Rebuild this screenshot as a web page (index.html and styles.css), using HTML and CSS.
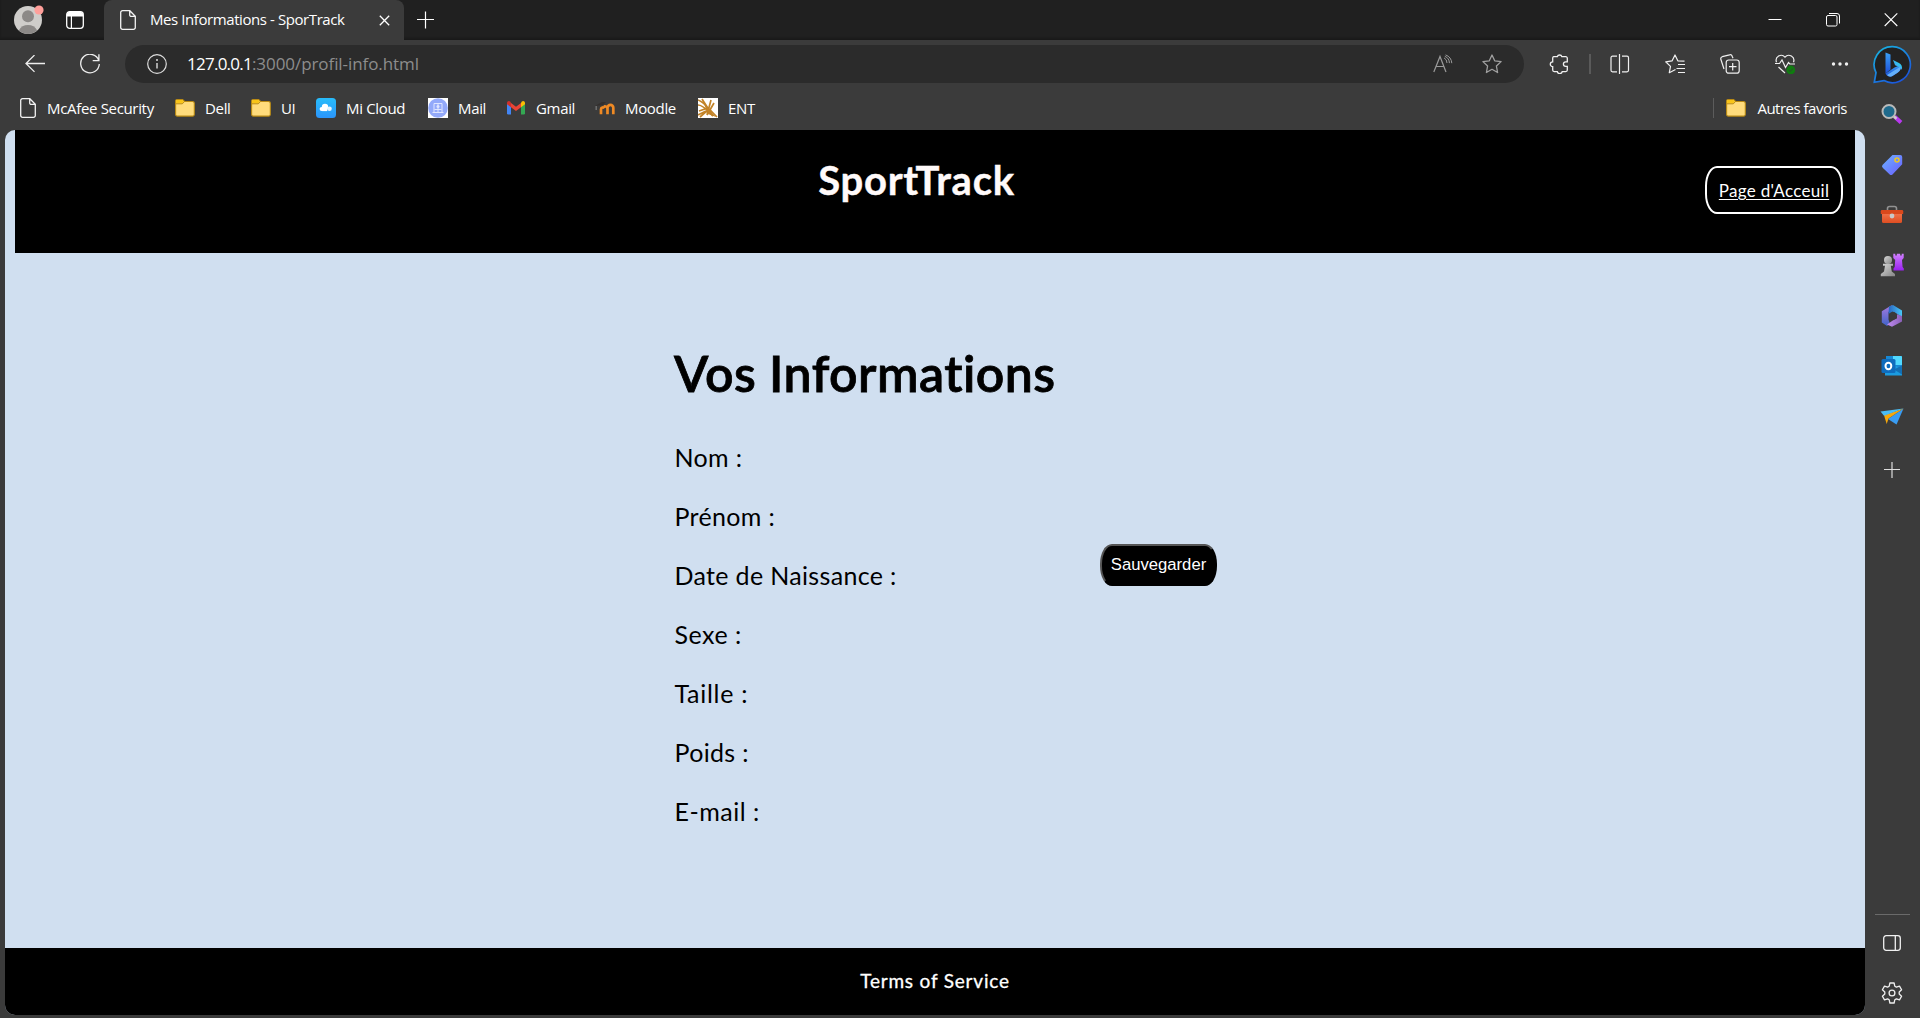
FILE: index.html
```html
<!DOCTYPE html>
<html lang="fr">
<head>
<meta charset="utf-8">
<title>Mes Informations - SporTrack</title>
<link rel="stylesheet" href="styles.css">
</head>
<body>
<svg width="0" height="0" class="defs">
  <defs>
    <linearGradient id="gBlue" x1="0" y1="0" x2="1" y2="1"><stop offset="0" stop-color="#6cb4ff"/><stop offset="1" stop-color="#6a5cff"/></linearGradient>
    <linearGradient id="gBing" x1="0" y1="0" x2="0" y2="1"><stop offset="0" stop-color="#3aa0f5"/><stop offset="1" stop-color="#1e50d8"/></linearGradient>
    <linearGradient id="gRing" x1="0" y1="0" x2=".7" y2="1"><stop offset="0" stop-color="#18b8e0"/><stop offset="1" stop-color="#1b55dd"/></linearGradient>
    <linearGradient id="gBowl" x1="0" y1="1" x2="1" y2="0"><stop offset="0" stop-color="#4f8df5"/><stop offset="1" stop-color="#20e0e8"/></linearGradient>
    <linearGradient id="gCloud" x1="0" y1="0" x2="0" y2="1"><stop offset="0" stop-color="#28bcfa"/><stop offset="1" stop-color="#2b95fb"/></linearGradient>
    <linearGradient id="gBox" x1="0" y1="0" x2="0" y2="1"><stop offset="0" stop-color="#f47a52"/><stop offset="1" stop-color="#de4e22"/></linearGradient>
    <linearGradient id="gPawn" x1="0" y1="0" x2="1" y2="1"><stop offset="0" stop-color="#d8d8d8"/><stop offset="1" stop-color="#858585"/></linearGradient>
    <linearGradient id="gRook" x1="0" y1="0" x2="0" y2="1"><stop offset="0" stop-color="#d080ff"/><stop offset="1" stop-color="#9a20f0"/></linearGradient>
    <linearGradient id="gM1" x1="0" y1="0" x2="0" y2="1"><stop offset="0" stop-color="#a77ade"/><stop offset="1" stop-color="#3f63c8"/></linearGradient>
    <linearGradient id="gM2" x1="0" y1="0" x2="1" y2="0"><stop offset="0" stop-color="#2864c0"/><stop offset="1" stop-color="#48c8f8"/></linearGradient>
    <linearGradient id="gM3" x1="0" y1="0" x2="1" y2="0"><stop offset="0" stop-color="#c08cf0"/><stop offset="1" stop-color="#8a60b8"/></linearGradient>
    <symbol id="doc" viewBox="0 0 16 20"><path d="M2.5 .7h7.3l5.500 5.500v11.300a1.800 1.800 0 0 1-1.800 1.800h-11A1.800 1.800 0 0 1 .7 17.500V2.500A1.800 1.800 0 0 1 2.500.7zM9.700.9v4a1.500 1.500 0 0 0 1.500 1.500h4" fill="none" stroke="#f2f2f2" stroke-width="1.300"/></symbol>
    <symbol id="folder" viewBox="0 0 20 20"><path d="M.6 3a1.500 1.500 0 0 1 1.500-1.500h5.500l2 2h8a1.700 1.700 0 0 1 1.700 1.700v11.200a1.700 1.700 0 0 1-1.700 1.700H2.300a1.700 1.700 0 0 1-1.700-1.700z" fill="#ffdc7c" stroke="#b98a14" stroke-width="1.100"/><path d="M1.100 5.500V3.100a1 1 0 0 1 1-1.100h5.300l1.500 1.600-1.700 1.900z" fill="#f8c418"/><path d="M1 5.800h6.200l2.200-2" fill="none" stroke="#b98a14"/></symbol>
  </defs>
</svg>

<div class="browser">
  <div class="titlebar">
    <svg class="avatar" width="32" height="32" viewBox="0 0 32 32"><circle cx="15" cy="16" r="14" fill="#cfcdca"/><circle cx="15" cy="12.200" r="6" fill="#8c8987"/><path d="M5.800 26.500a10.500 10.500 0 0 1 18.400 0A14 14 0 0 1 5.800 26.500z" fill="#8c8987"/><circle cx="26" cy="6" r="4.600" fill="#ff9f9a"/></svg>
    <svg class="workspaces" width="18" height="18" viewBox="0 0 18 18"><rect x=".7" y=".7" width="16.600" height="16.600" rx="3" fill="none" stroke="#fff" stroke-width="1.300"/><path d="M1 5.500V3a2 2 0 0 1 2-2h12a2 2 0 0 1 2 2v2.500z" fill="#fff"/><path d="M5.400 5v12" stroke="#fff" stroke-width="1.200"/></svg>
    <div class="tab">
      <svg width="16" height="20"><use href="#doc"/></svg>
      <span class="tab-title">Mes Informations - SporTrack</span>
      <svg class="tab-close" width="11" height="11" viewBox="0 0 11 11"><path d="M.8.8l9.400 9.400M10.200.8.8 10.200" stroke="#fff" stroke-width="1.300"/></svg>
    </div>
    <svg class="new-tab" width="18" height="18" viewBox="0 0 18 18"><path d="M9.500 .5v17M1 8.500h17" stroke="#fff" stroke-width="1.200"/></svg>
    <div class="window-buttons">
      <svg width="14" height="14" viewBox="0 0 14 14"><path d="M.5 6.500h13" stroke="#fff"/></svg>
      <svg width="14" height="14" viewBox="0 0 14 14"><rect x=".5" y="2.500" width="10.500" height="10.500" rx="1.500" fill="none" stroke="#fff"/><path d="M3 .5h8a2.500 2.500 0 0 1 2.500 2.500v7.500" fill="none" stroke="#fff"/></svg>
      <svg width="14" height="14" viewBox="0 0 14 14"><path d="M.7.4l12.600 12.600M13.300.4.7 13" stroke="#fff" stroke-width="1.100"/></svg>
    </div>
  </div>

  <div class="workarea">
    <div class="content">
      <div class="toolbar">
        <svg class="back" width="20" height="18" viewBox="0 0 20 18"><path d="M20 8.500H1M9.500.1 1 8.500l8.500 8.400" fill="none" stroke="#eee" stroke-width="1.300"/></svg>
        <svg class="reload" width="20" height="20" viewBox="0 0 20 20"><path d="M18.800 6.500A9.300 9.300 0 1 0 19.300 10M18.900.3v6.300h-6.200" fill="none" stroke="#eee" stroke-width="1.300"/></svg>
        <div class="address">
          <svg width="20" height="20" viewBox="0 0 20 20"><circle cx="10" cy="10" r="9.300" fill="none" stroke="#ddd" stroke-width="1.200"/><path d="M10 9v5.500" stroke="#ddd" stroke-width="1.400"/><circle cx="10" cy="6" r="1" fill="#ddd"/></svg>
          <div class="url"><span class="host">127.0.0.1</span><span class="path">:3000/profil-info.html</span></div>
          <svg class="aloud" width="20" height="20" viewBox="0 0 20 20"><path d="M.8 18 7 2.500 13 18M3 12.500h8" fill="none" stroke="#9a9a9a" stroke-width="1.200"/><path d="M11 3.800a6 6 0 0 1 3 5.200M12.500.9a9.500 9.500 0 0 1 6.300 8.300M11.800 2.300a7.500 7.500 0 0 1 4.600 6.800" fill="none" stroke="#9a9a9a"/></svg>
          <svg width="20" height="20" viewBox="0 0 20 20"><path d="m10 1 2.700 5.800 6.400.8-4.700 4.400 1.200 6.500L10 15.300l-5.600 3.200L5.600 12 .9 7.600l6.400-.8z" fill="none" stroke="#a0a0a0" stroke-width="1.300" stroke-linejoin="round"/></svg>
        </div>
        <div class="tools">
          <svg width="20" height="20" viewBox="0 0 20 20"><path d="M4.700 2.700h3.600a2.400 2.400 0 0 1 4.600 0h3.900a1.500 1.500 0 0 1 1.500 1.500v3.600h-1.600a2.300 2.300 0 0 0 0 4.600h1.600v3.700a1.500 1.500 0 0 1-1.500 1.500h-3.600a2.500 2.500 0 0 1-4.900 0H5.200a1.500 1.500 0 0 1-1.500-1.500v-3.500a2.400 2.400 0 0 1 0-4.800V4.200a1.500 1.500 0 0 1 1-1.500z" fill="none" stroke="#f0f0f0" stroke-width="1.300"/></svg>
          <i class="sep"></i>
          <svg width="20" height="20" viewBox="0 0 20 20"><path d="M7 2.200H2.500A1.500 1.500 0 0 0 1 3.700v12.600a1.500 1.500 0 0 0 1.500 1.500H7M12 2.200h5a1.500 1.500 0 0 1 1.500 1.500v12.600a1.500 1.500 0 0 1-1.500 1.500h-5M9.500 0v20" fill="none" stroke="#f0f0f0" stroke-width="1.200"/></svg>
          <svg width="20" height="20" viewBox="0 0 20 20"><path d="M10.500 15.500 4.300 18.700l1.200-6.300L.7 7.800l6.300-.9 3-5.900 2.800 5.800 6.700.4M13 10.500h7M11.500 14.500H20M13 18.500h7" fill="none" stroke="#f0f0f0" stroke-width="1.200" stroke-linejoin="round"/></svg>
          <svg width="20" height="20" viewBox="0 0 20 20"><rect x="6.200" y="6" width="13" height="13.200" rx="2.500" fill="none" stroke="#f0f0f0" stroke-width="1.200"/><path d="M12.700 9v7.500M9 12.700h7.500M4 15 .9 5.500A2.200 2.200 0 0 1 2.300 2.700L9.500.8a2.200 2.200 0 0 1 2.700 1.400l.8 2" fill="none" stroke="#f0f0f0" stroke-width="1.200"/></svg>
          <svg width="20" height="20" viewBox="0 0 20 20"><path d="M1.500 8.200A5 5 0 0 1 10 3.200a5 5 0 0 1 8.500 5M3.500 13l6.500 6M0 9.500h4.500L7 6l3.500 7.500L13.500 8.500l1.300 1.500H20" fill="none" stroke="#f0f0f0" stroke-width="1.200"/><circle cx="15.800" cy="16" r="4.400" fill="#107c10"/><path d="m13.700 16 1.500 1.500 2.700-2.900" fill="none" stroke="#2c4a2c"/></svg>
          <svg width="20" height="20" viewBox="0 0 20 20"><g fill="#f0f0f0"><circle cx="3.500" cy="10" r="1.700"/><circle cx="10" cy="10" r="1.700"/><circle cx="16.500" cy="10" r="1.700"/></g></svg>
        </div>
      </div>

      <div class="bookmarks">
        <div class="bm bm-doc"><svg width="16" height="20"><use href="#doc"/></svg><span>McAfee Security</span></div>
        <div class="bm"><svg width="20" height="20"><use href="#folder"/></svg><span>Dell</span></div>
        <div class="bm"><svg width="20" height="20"><use href="#folder"/></svg><span>UI</span></div>
        <div class="bm"><svg width="20" height="20" viewBox="0 0 20 20"><rect width="20" height="20" rx="3.500" fill="url(#gCloud)"/><circle cx="9" cy="9" r="3.200" fill="#fff"/><circle cx="5.700" cy="11" r="2.100" fill="#fff"/><path d="M5.700 10h5.500v3.100H5.700z" fill="#fff"/><circle cx="13.500" cy="10.800" r="2.300" fill="#e4f4ff"/></svg><span>Mi Cloud</span></div>
        <div class="bm"><svg width="20" height="20" viewBox="0 0 20 20"><path d="M0 0h20v20H0z" fill="#fff"/><circle cx="10" cy="10" r="9.800" fill="#93a9fa"/><path d="M6 5.500h8v9H6zM4.500 14.500h11M10 6v8M6.500 11.500h7" fill="none" stroke="#dfe5ff"/><circle cx="10" cy="8.500" r="1.500" fill="#dfe5ff"/></svg><span>Mail</span></div>
        <div class="bm"><svg width="20" height="20" viewBox="0 0 20 20"><path d="M1 5.500v9.700a1.300 1.300 0 0 0 1.300 1.300H5V8z" fill="#4285f4"/><path d="M15 8v8.500h2.700a1.300 1.300 0 0 0 1.300-1.300V5.500z" fill="#34a853"/><path d="M15 5v4.200l4-3V5c0-2-2-2.700-3.200-1.600z" fill="#fbbc04"/><path d="M5 9.200V5l5 3.800L15 5v4.200L10 13z" fill="#ea4335"/><path d="M1 5v1.200l4 3V4.700L4.200 3.400C3 2.300 1 3 1 5z" fill="#d0302a"/></svg><span>Gmail</span></div>
        <div class="bm"><svg width="20" height="20" viewBox="0 0 20 20"><path d="M6 16.300v-5a1.900 1.900 0 0 1 3.500-1M12.500 16.300V9.800a2.600 2.600 0 0 1 5.800 0v6.500M9 8.500a2.600 2.600 0 0 1 3.500 2v5.800" fill="none" stroke="#f08a24" stroke-width="2.700"/><path d="M0 8 7 4h4L8 7z" fill="#332f2d"/><path d="M1.200 8v4" stroke="#777" stroke-width="1.300"/></svg><span>Moodle</span></div>
        <div class="bm"><svg width="20" height="20" viewBox="0 0 20 20"><path d="M0 0h20v20H0z" fill="#fff"/><path d="M0 2c5 1 9 7 19 17M0 7c6 0 9 6 15 11M4 1l9 14M13 2 9 17M16 5l-7 12M1 13l9-3M2 19l9-8M0 17l8-4" fill="none" stroke="#c28328" stroke-width="1.700"/><path d="m6 6 12 13-8-3z" fill="#c28328"/></svg><span>ENT</span></div>
        <div class="bm others"><svg width="20" height="20"><use href="#folder"/></svg><span>Autres favoris</span></div>
      </div>

      <div class="page">
        <header class="site-header">
          <h1>SportTrack</h1>
          <a class="home-link" href="#">Page d'Acceuil</a>
        </header>
        <main class="profile">
          <form class="info">
            <h2>Vos Informations</h2>
            <p>Nom :</p>
            <p>Prénom :</p>
            <p>Date de Naissance :</p>
            <p class="sexe">Sexe :</p>
            <p class="taille">Taille :</p>
            <p>Poids :</p>
            <p class="email">E-mail :</p>
          </form>
          <button class="save" type="button">Sauvegarder</button>
        </main>
        <footer class="site-footer">Terms of Service</footer>
      </div>
    </div>

    <aside class="sidebar">
      <div class="bing"><svg width="40" height="40" viewBox="0 0 40 40"><path d="M20.500 1.700a18 18 0 1 1-8.600 33.900L2.300 37.300 4 27.700A18 18 0 0 1 20.500 1.700z" fill="#222" stroke="url(#gRing)" stroke-width="1.700"/><path d="M13.500 7.500 18.500 9.500v15l-5 4z" fill="url(#gBing)"/><path d="m13.500 28.500 9-6 6-2.500c1.500 3-.2 6-3 7.700l-5 3.300a5 5 0 0 1-7-2.500z" fill="url(#gBing)"/><path d="m21 15 5.500 2.800a6 6 0 0 1 3.200 7.200c-.5-1.700-2-2.600-3.600-3.400l-3-1.300z" fill="url(#gBowl)"/><path d="m15 30 8.500-5.200 5-3c.8 2.300-.8 4.500-3 5.900l-5 3.300c-2 1.200-4 .6-5.500-1z" fill="#64b0fa"/></svg></div>
      <div class="app"><svg width="22" height="22" viewBox="0 0 22 22"><path d="m13.500 13.500 6.500 6" stroke="#b838f0" stroke-width="4"/><path d="m12.500 13 3 2.700" stroke="#ccc" stroke-width="2.500"/><circle cx="8" cy="8.500" r="6.500" fill="#1f6a8c" stroke="#b9b9b9" stroke-width="2"/></svg></div>
      <div class="app"><svg width="22" height="22" viewBox="0 0 22 22"><path d="M11.500 1h7.700a2 2 0 0 1 2 2v7.200l-9.700 10.200a2 2 0 0 1-2.800 0l-7-6.700a2 2 0 0 1 0-2.900z" fill="url(#gBlue)"/><circle cx="16" cy="6" r="2" fill="none" stroke="#e8c52a" stroke-width="1.600"/></svg></div>
      <div class="app"><svg width="24" height="22" viewBox="0 0 24 22"><path d="M7.500 6V4.500a2 2 0 0 1 2-2h5a2 2 0 0 1 2 2V6" fill="none" stroke="#929292" stroke-width="1.600"/><rect x="2" y="7" width="20" height="12" rx="1.500" fill="url(#gBox)"/><path d="M2 6h20a1.200 1.200 0 0 1 1.200 1.200V10H.8V7.200A1.200 1.200 0 0 1 2 6z" fill="#d9481c"/><circle cx="12" cy="12" r="2.400" fill="#c8c8c8"/></svg></div>
      <div class="app"><svg width="24" height="24" viewBox="0 0 24 24"><path d="M13.300.8h2v1.700h1.500V.8h3.400v1.700h1.500V.8h2V5L22 7l.6 7 1.200 1.500v2H13.500v-2l1.200-1.500.5-7-1.900-2z" fill="url(#gRook)"/><circle cx="8" cy="7" r="4" fill="url(#gPawn)"/><path d="M3 10.700h10v2h-2.200l1 5.800 3.200 2.500v2.300H.8V21L4 18.500l1-5.800H3z" fill="url(#gPawn)"/></svg></div>
      <div class="app"><svg width="22" height="22" viewBox="0 0 22 22"><path d="M11 0 7.500 7.500v7L9 19l-3 2L.8 17.500V6.300z" fill="url(#gM1)"/><path d="M8 1.500 12 0l9 5.500v6.500l-4-2.500L13 6.800 7.500 9z" fill="url(#gM2)"/><path d="M21 11v5.500l-10 5.300-5-2.300L12.500 15l3.500-1.700V9.200z" fill="url(#gM3)"/><path d="m8.500 8.300 3-1.800 4 2.500v4.500L12 15.300l-3.500-2z" fill="#3a3a3a"/></svg></div>
      <div class="app"><svg width="22" height="22" viewBox="0 0 22 22"><path d="M5 1h15a1 1 0 0 1 1 1v18H5z" fill="#1788d4"/><path d="M12 1h8a1 1 0 0 1 1 1v8h-9z" fill="#50d9ff"/><path d="M4 20.500V15l10-5 7 5v5.500z" fill="#1a9be0"/><path d="M21 10.500v9l-8-5z" fill="#136fb4"/><rect x=".5" y="4" width="14" height="14" rx="1.500" fill="#0f6cbd"/><ellipse cx="7.400" cy="11" rx="2.900" ry="3.300" fill="none" stroke="#fff" stroke-width="2"/></svg></div>
      <div class="app"><svg width="24" height="20" viewBox="0 0 24 20"><path d="m8 12 15.500-10.500L16.500 17.500z" fill="#3a9cf2"/><path d="M4 8.200 23.500 1.500 8.500 11.500l-1.800 5.500z" fill="#f5a80c"/><path d="M.5 4.500 23.500 1.500 4 8.700z" fill="#49bdf5"/></svg></div>
      <div class="app add"><svg width="16" height="16" viewBox="0 0 16 16"><path d="M8 0v16M0 7.500h16" stroke="#ddd" stroke-width="1.200"/></svg></div>
      <div class="bottom-tools">
        <svg width="18" height="16" viewBox="0 0 18 16"><rect x=".7" y=".7" width="16.600" height="14.600" rx="2.500" fill="none" stroke="#f0f0f0" stroke-width="1.300"/><path d="M12.300 1v14" stroke="#f0f0f0" stroke-width="1.300"/></svg>
        <svg width="22" height="22" viewBox="0 0 22 22"><path d="M8.900 1h4.200l.7 3.200 1.600.9 3.100-1 2.100 3.700L18.200 10v2l2.400 2.200-2.100 3.700-3.100-1-1.600.9-.7 3.200H8.900l-.7-3.200-1.600-.9-3.100 1-2.100-3.700L3.800 12v-2L1.400 7.800l2.100-3.700 3.100 1 1.600-.9z" fill="none" stroke="#f0f0f0" stroke-width="1.300" stroke-linejoin="round"/><circle cx="11" cy="11" r="2.900" fill="none" stroke="#f0f0f0" stroke-width="1.300"/></svg>
      </div>
    </aside>
  </div>
</div>
</body>
</html>
```
FILE: styles.css
```css
* { box-sizing: border-box; }
body { margin: 0; background: #3b3b3b; font-family: "Open Sans", "Noto Sans", sans-serif; color: #fff; }
svg { display: block; flex: none; }
.defs { position: absolute; }
.browser { width: 1920px; height: 1018px; overflow: hidden; display: flex; flex-direction: column; }

.titlebar { height: 40px; background: #202020; display: flex; align-items: center; padding-left: 13px; box-shadow: inset 0 -2px 2px #1a1a1a; }
.workspaces { margin-left: 21px; }
.tab { width: 300px; height: 40px; margin-left: 20px; padding: 0 14px 0 16px; background: #3b3b3b; border-radius: 8px 8px 0 0; display: flex; align-items: center; }
.tab-title { margin-left: 14px; font-size: 15px; letter-spacing: -0.42px; white-space: nowrap; line-height: 38px; height: 40px; }
.tab-close { margin-left: auto; }
.new-tab { margin-left: 12px; }
.window-buttons { margin-left: auto; margin-right: 22px; display: flex; gap: 44px; }

.workarea { flex: 1; display: flex; min-height: 0; }
.content { width: 1865px; display: flex; flex-direction: column; padding: 0 0 3px 5px; }

.toolbar { height: 48px; display: flex; align-items: center; padding-left: 20px; }
.reload { margin-left: 35px; }
.address { width: 1399px; height: 38px; margin-left: 25px; padding: 0 22px; border-radius: 19px; background: #2b2b2b; display: flex; align-items: center; }
.url { flex: 1; margin-left: 20px; font-size: 17px; line-height: 37px; height: 38px; white-space: nowrap; }
.host { letter-spacing: -0.75px; }
.path { color: #8d8d8d; letter-spacing: -0.07px; }
.aloud { margin-right: 29px; }
.tools { display: flex; align-items: center; gap: 35px; margin-left: 25px; }
.sep { width: 2px; height: 20px; background: #5a5a5a; margin: 0 -16px 0 -15px; }

.bookmarks { height: 42px; padding: 0 18px 2px 13px; display: grid; grid-template-columns: 157px 76px 65px 112px 78px 89px 103px 1fr auto; align-items: center; }
.bm { display: flex; align-items: center; gap: 10px; font-size: 15px; line-height: 20px; letter-spacing: -0.33px; white-space: nowrap; }
.bm-doc { padding-left: 2px; gap: 11px; }
.bm span { height: 20px; }
.others { border-left: 1px solid #5c5c5c; padding-left: 12px; letter-spacing: -0.5px; gap: 11px; }

.page { flex: 1; background: #d0dff0; border-radius: 10px; overflow: hidden; display: flex; flex-direction: column; font-family: Lato, "Open Sans", sans-serif; }
.site-header { height: 123px; margin: 0 10px; background: #000; display: grid; grid-template-columns: 1fr auto 1fr; padding: 26px 12px 0 0; }
.site-header h1 { grid-column: 2; margin: 0 0 0 -25px; font-size: 40px; line-height: 48px; font-weight: 700; letter-spacing: 0.75px; color: #fffafa; -webkit-text-stroke: 0.4px #fffafa; }
.home-link { justify-self: end; width: 138px; height: 48px; margin-top: 10px; border: 2px solid #fff; border-radius: 12px / 20px; color: #fff; font-size: 17px; line-height: 45px; text-align: center; letter-spacing: 0.3px; text-underline-offset: 2px; text-decoration-thickness: 1px; }

.profile { flex: 1; display: flex; padding: 90px 0 0 670px; color: #000; }
.info { width: 425px; }
.info h2 { margin: 0 0 27px -1px; font-size: 50px; line-height: 60px; font-weight: 600; letter-spacing: 0.45px; white-space: nowrap; -webkit-text-stroke: 0.8px #000; }
.info p { margin: 0 0 0 -0.5px; height: 59px; font-size: 25px; line-height: 54px; letter-spacing: 0.33px; }
.info .sexe, .info .email { letter-spacing: 0.5px; }
.info .taille { letter-spacing: 0.7px; }
.save { width: 117px; height: 42px; margin-top: 201px; padding: 0; background: #000; color: #fff; border: 2px solid; border-color: #555 #000 #000 #555; border-radius: 12px / 20px; font: 16.667px "Liberation Sans", Arial, sans-serif; }
.site-footer { height: 67px; background: #000; font-size: 19px; line-height: 66px; text-align: center; letter-spacing: 0.8px; -webkit-text-stroke: 0.3px #fff; }

.sidebar { width: 55px; display: flex; flex-direction: column; align-items: center; padding-right: 1px; }
.bing { height: 49px; display: flex; align-items: center; }
.app { height: 50.4px; display: flex; align-items: center; }
.add { height: 57px; }
.bottom-tools { width: 35px; height: 104px; margin-top: auto; border-top: 1px solid #6a6a6a; display: flex; flex-direction: column; align-items: center; gap: 31px; padding-top: 20px; }
```
